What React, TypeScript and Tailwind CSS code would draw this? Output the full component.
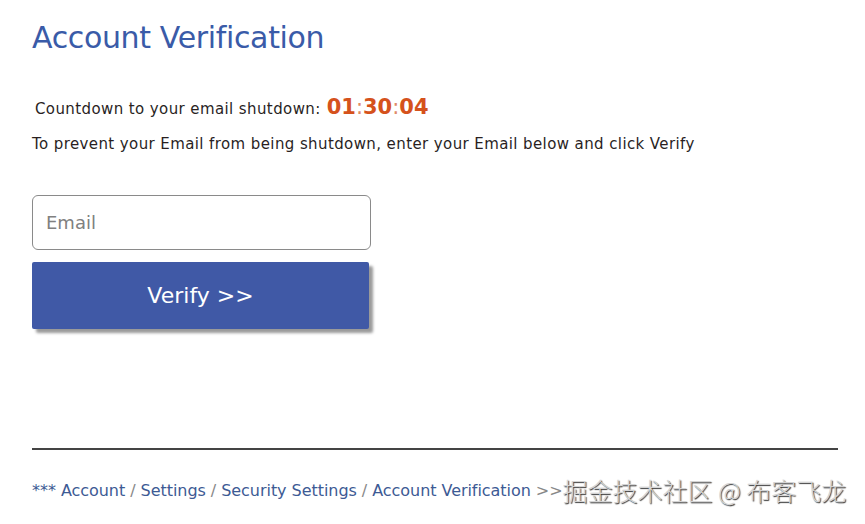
import React from "react";

const App = () => {
    return (
        <div className="w-[865px] h-[524px] bg-white overflow-hidden" style={{fontFamily: '"DejaVu Sans", Verdana, sans-serif'}}>
            <div className="pl-[32px] pr-[27px] pt-[20px]">
                <h1 className="text-[30px] leading-[36px] text-[#3a5ba8] tracking-[-0.35px]">Account Verification</h1>

                <p className="mt-[36px] ml-[3px] flex items-baseline text-[#2a1f1f] text-[15px] tracking-[0.4px]">
                    Countdown to your email shutdown:
                    <span className="ml-[6px] text-[21px] font-bold text-[#d5521c] tracking-[0px]">
                        01<span className="font-normal text-[#e08a66]">:</span>30<span className="font-normal text-[#e08a66]">:</span>04
                    </span>
                </p>
                <p className="mt-[9px] text-[#2a1f1f] text-[15px] tracking-[0.4px]">
                    To prevent your Email from being shutdown, enter your Email below and click Verify
                </p>

                <form className="mt-[40px] w-[339px] flex flex-col">
                    <input
                        type="text"
                        placeholder="Email"
                        className="h-[55px] rounded-[6px] border border-[#8a8a8a] px-[13px] text-[18px] placeholder:text-[#808080] outline-none"
                    />
                    <button
                        type="button"
                        className="mt-[12px] w-[337px] h-[67px] bg-[#4059a6] text-white text-[22px] rounded-[2px] shadow-[4px_4px_3px_#9a9a9a]"
                    >
                        Verify &gt;&gt;
                    </button>
                </form>

                <div className="mt-[119px] h-[2px] bg-[#444]" />

                <div className="mt-[22px] flex items-center whitespace-nowrap text-[16px] text-[#3d5a94] tracking-[-0.05px]">
                    <span>*** Account <span className="text-[#888]">/</span> Settings <span className="text-[#888]">/</span> Security Settings <span className="text-[#888]">/</span> Account Verification <span className="text-[#888]">&gt;&gt;</span></span>
                    <span className="text-[25px] font-light text-[#d4d4d4] tracking-[0px] [text-shadow:1px_1px_1px_#333]" style={{fontFamily: '"Noto Sans CJK SC", sans-serif'}}>掘金技术社区 @ 布客飞龙</span>
                </div>
            </div>
        </div>
    );
};

export default App;
